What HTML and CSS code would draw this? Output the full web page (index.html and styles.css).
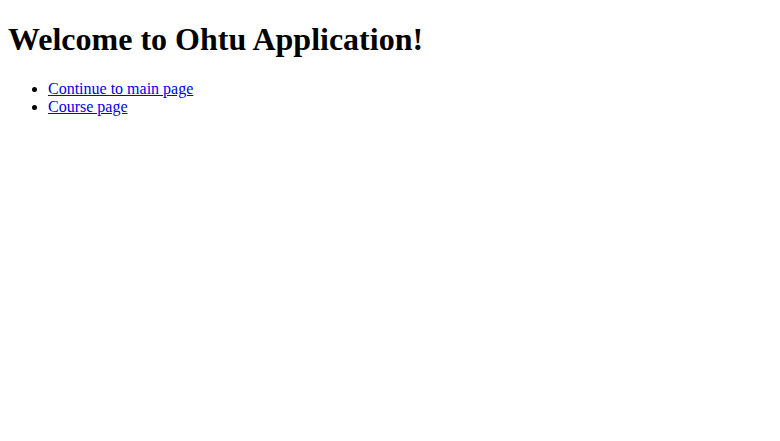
FILE: index.html
```html
<!DOCTYPE html>
<html>
<head>
<meta charset="utf-8">
<title>Ohtu Application</title>
<link rel="stylesheet" href="styles.css">
</head>
<body class="page">
<h1 class="title">Welcome to Ohtu Application!</h1>
<ul class="links">
<li><a class="link" href="#">Continue to main page</a></li>
<li><a class="link" href="#">Course page</a></li>
</ul>
</body>
</html>
```
FILE: styles.css
```css
.page {
  margin: 8px;
  font-family: "Liberation Serif", "Times New Roman", serif;
  font-size: 16px;
  color: #000;
  background: #fff;
}
.title {
  font-size: 2em;
  font-weight: bold;
  margin: 13.44px 0 21.44px;
}
.links {
  margin: 1em 0;
  padding-left: 40px;
}
.link {
  color: #0000ee;
}
```
